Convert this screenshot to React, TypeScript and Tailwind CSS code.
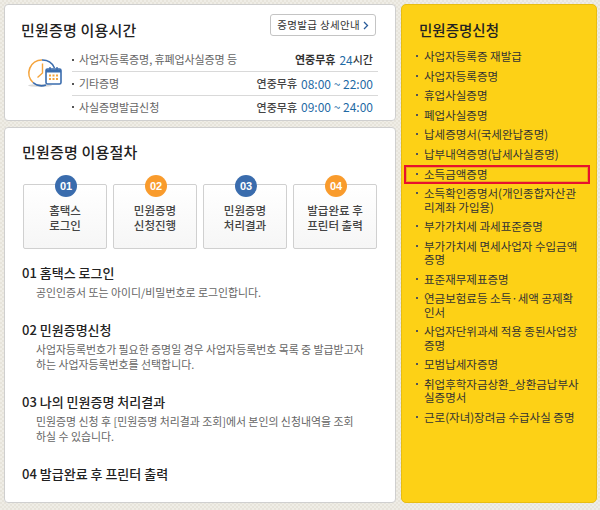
const FONT = "font-['Noto_Sans_CJK_KR','Liberation_Sans',sans-serif]";

const HOURS = [
  { label: '사업자등록증명, 휴폐업사실증명 등', day: '연중무휴', time: '24', suffix: '시간', strong: true },
  { label: '기타증명', day: '연중무휴', time: '08:00 ~ 22:00', suffix: '', strong: false },
  { label: '사실증명발급신청', day: '연중무휴', time: '09:00 ~ 24:00', suffix: '', strong: false },
];

const STEPS = [
  { n: '01', color: 'bg-[#3a6cad]', lines: ['홈택스', '로그인'] },
  { n: '02', color: 'bg-[#f99b2c]', lines: ['민원증명', '신청진행'] },
  { n: '03', color: 'bg-[#3a6cad]', lines: ['민원증명', '처리결과'] },
  { n: '04', color: 'bg-[#f99b2c]', lines: ['발급완료 후', '프린터 출력'] },
];

const DETAILS = [
  { title: '01 홈택스 로그인', body: ['공인인증서 또는 아이디/비밀번호로 로그인합니다.'] },
  { title: '02 민원증명신청', body: ['사업자등록번호가 필요한 증명일 경우 사업자등록번호 목록 중 발급받고자', '하는 사업자등록번호를 선택합니다.'] },
  { title: '03 나의 민원증명 처리결과', body: ['민원증명 신청 후 [민원증명 처리결과 조회]에서 본인의 신청내역을 조회', '하실 수 있습니다.'] },
  { title: '04 발급완료 후 프린터 출력', body: [] },
];

const MENU = [
  ['사업자등록증 재발급'],
  ['사업자등록증명'],
  ['휴업사실증명'],
  ['폐업사실증명'],
  ['납세증명서(국세완납증명)'],
  ['납부내역증명(납세사실증명)'],
  ['소득금액증명'],
  ['소득확인증명서(개인종합자산관', '리계좌 가입용)'],
  ['부가가치세 과세표준증명'],
  ['부가가치세 면세사업자 수입금액', '증명'],
  ['표준재무제표증명'],
  ['연금보험료등 소득·세액 공제확', '인서'],
  ['사업자단위과세 적용 종된사업장', '증명'],
  ['모범납세자증명'],
  ['취업후학자금상환_상환금납부사', '실증명서'],
  ['근로(자녀)장려금 수급사실 증명'],
];

function ClockIcon() {
  return (
    <svg width="36" height="32" viewBox="0 0 36 32" fill="none">
      <ellipse cx="13" cy="28.5" rx="12" ry="1.5" fill="#d9d9d9" />
      <path d="M6 25.5A13 13 0 0 1 15 3" stroke="#f5a43c" strokeWidth="1.6" />
      <path d="M15 3A13 13 0 0 1 27.5 11" stroke="#3a6cad" strokeWidth="1.6" />
      <path d="M6 25.5A13 13 0 0 0 19 28" stroke="#3a6cad" strokeWidth="1.6" />
      <path d="M15.5 6.5V16L10.5 20.5" stroke="#f5a43c" strokeWidth="1.4" />
      <rect x="19" y="12" width="15" height="15" rx="1.5" fill="#fff" stroke="#3a6cad" strokeWidth="1.6" />
      <path d="M19 12.5H34V15.5H19Z" fill="#3a6cad" />
      <path d="M23 10V13M30 10V13" stroke="#3a6cad" strokeWidth="1.4" />
      <path d="M22 18.5H24M25.5 18.5H27.5M29 18.5H31M22 22H24M25.5 22H27.5M29 22H31" stroke="#f5a43c" strokeWidth="2" />
    </svg>
  );
}

export default function App() {
  return (
    <div className={`${FONT} flex w-[600px] h-[510px] gap-[5px] pt-[4px] pl-[4px] bg-[repeating-conic-gradient(#e7e4db_0_25%,#efede6_0_50%)] bg-[length:4px_4px] overflow-hidden`}>
      <div className="flex flex-col w-[392px] gap-[6px]">
        {/* 이용시간 */}
        <section className="relative h-[117px] bg-white border border-[#cfcfcf] rounded-[4px] pl-[17px] pr-[17px] pt-[15px]">
          <h2 className="text-[15px] leading-[20px] font-medium text-[#222] tracking-[0.2px] -ml-[1px]">민원증명 이용시간</h2>
          <a className="absolute top-[9px] right-[19px] flex items-center h-[22px] px-[6px] bg-white border border-[#c4c4c4] rounded-[3px] text-[10.5px] tracking-[0.35px] text-[#333]">
            증명발급 상세안내
            <svg className="ml-[3px]" width="6" height="9" viewBox="0 0 6 9" fill="none"><path d="M1 1L4.5 4.5L1 8" stroke="#2a5c9a" strokeWidth="1.3" /></svg>
          </a>
          <div className="flex mt-[8px]">
            <div className="w-[50px] pl-[5px] pt-[9px] shrink-0"><ClockIcon /></div>
            <ul className="w-[306px] -mr-[6px]">
              {HOURS.map((h, i) => (
                <li key={h.label} className={`flex items-center pr-[5px] text-[11px] ${i < 2 ? 'h-[24px] border-b border-[#d9d9d9]' : 'h-[22px]'}`}>
                  <span className="w-[2px] h-[2px] bg-[#555] mr-[5px]" />
                  <span className="text-[#666] tracking-[-0.1px]">{h.label}</span>
                  <span className={`ml-auto ${h.strong ? 'font-bold text-[#333]' : 'font-medium text-[#444]'}`}>{h.day}</span>
                  <span className="ml-[4px] text-[#1f6aa5] text-[12px]">{h.time}</span>
                  {h.suffix && <span className="text-[#333] font-medium">{h.suffix}</span>}
                </li>
              ))}
            </ul>
          </div>
        </section>

        {/* 이용절차 */}
        <section className="h-[376px] bg-white border border-[#cfcfcf] rounded-[4px] pl-[18px] pt-[14px]">
          <h2 className="ml-[-1px] text-[15px] leading-[20px] font-medium text-[#222] tracking-[0.2px]">민원증명 이용절차</h2>
          <div className="flex gap-[6px] mt-[22px]">
            {STEPS.map((s) => (
              <div key={s.n} className="relative w-[84px] h-[65px] pt-[18px] border border-[#d0d0d0] rounded-[2px] bg-gradient-to-b from-white to-[#f6f6f6] text-center text-[11.5px] leading-[15px] font-medium text-[#444]">
                <span className={`absolute -top-[10px] left-[31px] flex items-center justify-center w-[22px] h-[22px] rounded-full ${s.color} font-['Liberation_Sans',sans-serif] text-[11px] font-bold text-white`}>{s.n}</span>
                {s.lines.map((l) => <div key={l}>{l}</div>)}
              </div>
            ))}
          </div>
          <div className="mt-[16px] flex flex-col gap-[22.5px] -ml-[1px]">
            {DETAILS.map((d) => (
              <div key={d.title}>
                <h3 className="text-[13px] leading-[16px] font-medium text-[#222]">{d.title}</h3>
                {d.body.length > 0 && (
                  <div className="mt-[3.5px] pl-[14px] text-[10.9px] leading-[15px] text-[#666]">
                    {d.body.map((b) => <div key={b} className="whitespace-nowrap">{b}</div>)}
                  </div>
                )}
              </div>
            ))}
          </div>
        </section>
      </div>

      {/* 민원증명신청 */}
      <aside className="w-[196px] h-[499px] bg-[#fdd116] border border-[#e8bd10] rounded-[5px] pl-[2px] pr-[6px] pt-[15px]">
        <h2 className="pl-[15px] text-[14.5px] leading-[20px] font-medium text-[#222]">민원증명신청</h2>
        <ul className="mt-[7px]">
          {MENU.map((lines) => {
            const selected = lines[0] === '소득금액증명';
            return (
              <li key={lines[0]} className={`flex py-[3.1px] pl-[12px] text-[11.5px] leading-[13.4px] text-[#333] ${selected ? 'shadow-[inset_0_0_0_2px_#e8112d,inset_0_0_0_3px_#eda51b]' : ''}`}>
                <span className="w-[2px] h-[2px] mt-[5px] mr-[6px] bg-[#555] shrink-0" />
                <span>{lines.map((l) => <div key={l} className="whitespace-nowrap">{l}</div>)}</span>
              </li>
            );
          })}
        </ul>
      </aside>
    </div>
  );
}
